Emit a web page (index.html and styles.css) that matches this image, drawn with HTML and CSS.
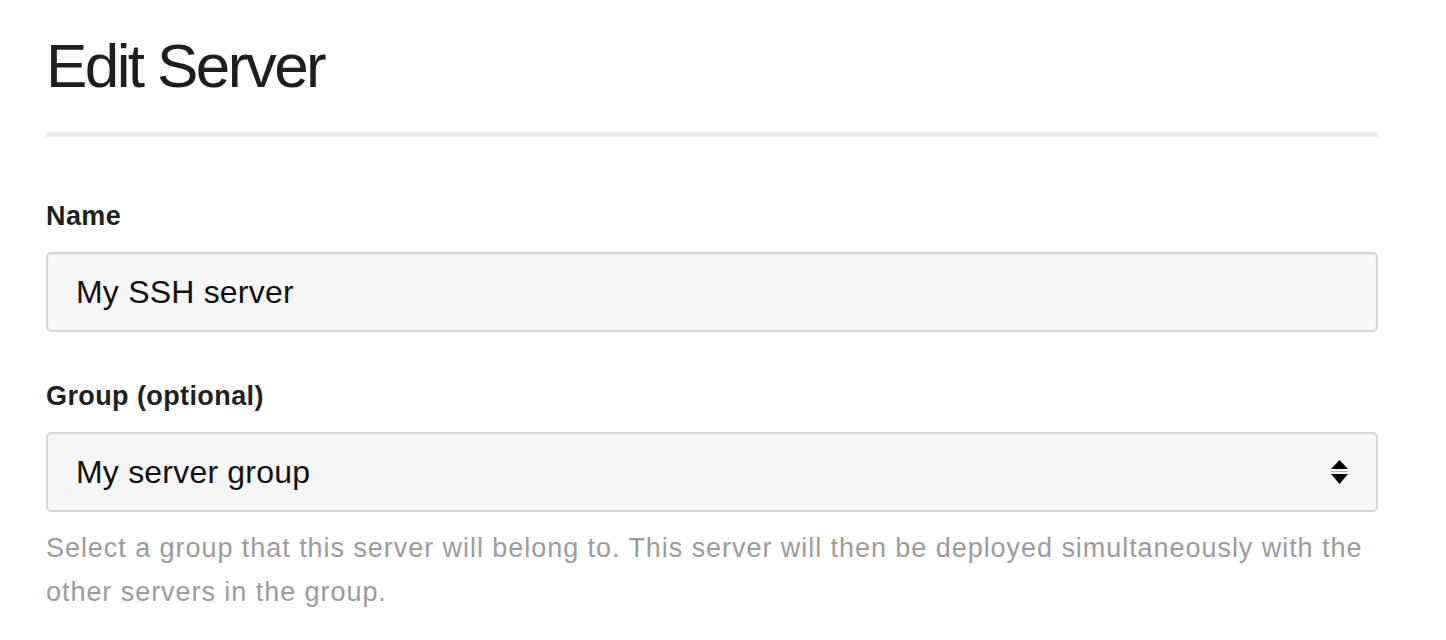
FILE: index.html
```html
<!DOCTYPE html>
<html lang="en">
<head>
  <meta charset="UTF-8">
  <meta name="viewport" content="width=device-width, initial-scale=1.0">
  <title>Edit Server</title>
  <link rel="stylesheet" href="styles.css">
</head>
<body>
  <div class="container">
    <div class="page-header">
      <h1>Edit Server</h1>
    </div>

    <form class="server-form">
      <div class="form-group">
        <label for="name">Name</label>
        <input type="text" id="name" class="form-control" value="My SSH server">
      </div>

      <div class="form-group group-select">
        <label for="group">Group (optional)</label>
        <div class="select-wrap">
          <select id="group" class="form-control">
            <option>My server group</option>
          </select>
          <!-- up/down stepper arrows -->
          <svg class="select-arrows" width="17" height="24" viewBox="0 0 17 24">
            <polygon points="8.5,0 17,9 0,9" fill="#000"/>
            <line x1="0" y1="11.5" x2="17" y2="11.5" stroke="#b5b5b5" stroke-width="1"/>
            <polygon points="0,14 17,14 8.5,24" fill="#000"/>
          </svg>
        </div>
        <p class="help-block">Select a group that this server will belong to. This server will then be deployed simultaneously with the other servers in the group.</p>
      </div>
    </form>
  </div>
</body>
</html>
```

FILE: styles.css
```css
body {
  margin: 0;
  font-family: "Liberation Sans", Arial, sans-serif;
  color: #222;
  background: #fff;
}

.container {
  padding: 29px 68px 0 46px;
}

.page-header {
  padding-bottom: 29px;
  border-bottom: 5px solid #eaeaea;
}

.page-header h1 {
  margin: 0;
  font-size: 62px;
  line-height: 74px;
  font-weight: 400;
  letter-spacing: -2.6px;
  color: #1e1e1e;
}

.form-group {
  margin-top: 61px;
}

.form-group.group-select {
  margin-top: 46px;
}

.form-group label {
  display: block;
  font-size: 27px;
  line-height: 36px;
  font-weight: 700;
  letter-spacing: 0.4px;
  margin-bottom: 18px;
  color: #1f1f1f;
}

.form-control {
  display: block;
  width: 100%;
  height: 80px;
  box-sizing: border-box;
  padding: 0 28px;
  font-family: inherit;
  font-size: 32px;
  letter-spacing: 0.2px;
  color: #111;
  background-color: #f6f6f6;
  border: 2px solid #d7d7d7;
  border-radius: 5px;
  box-shadow: inset 0 1px 2px rgba(0, 0, 0, 0.04);
  outline: none;
  margin: 0;
}

.select-wrap {
  position: relative;
}

.select-wrap select {
  -webkit-appearance: none;
  appearance: none;
}

.select-arrows {
  position: absolute;
  top: 28px;
  right: 30px;
}

.help-block {
  margin: 14px 0 0;
  font-size: 27px;
  line-height: 44px;
  letter-spacing: 0.95px;
  color: #9b9b9b;
}
```
